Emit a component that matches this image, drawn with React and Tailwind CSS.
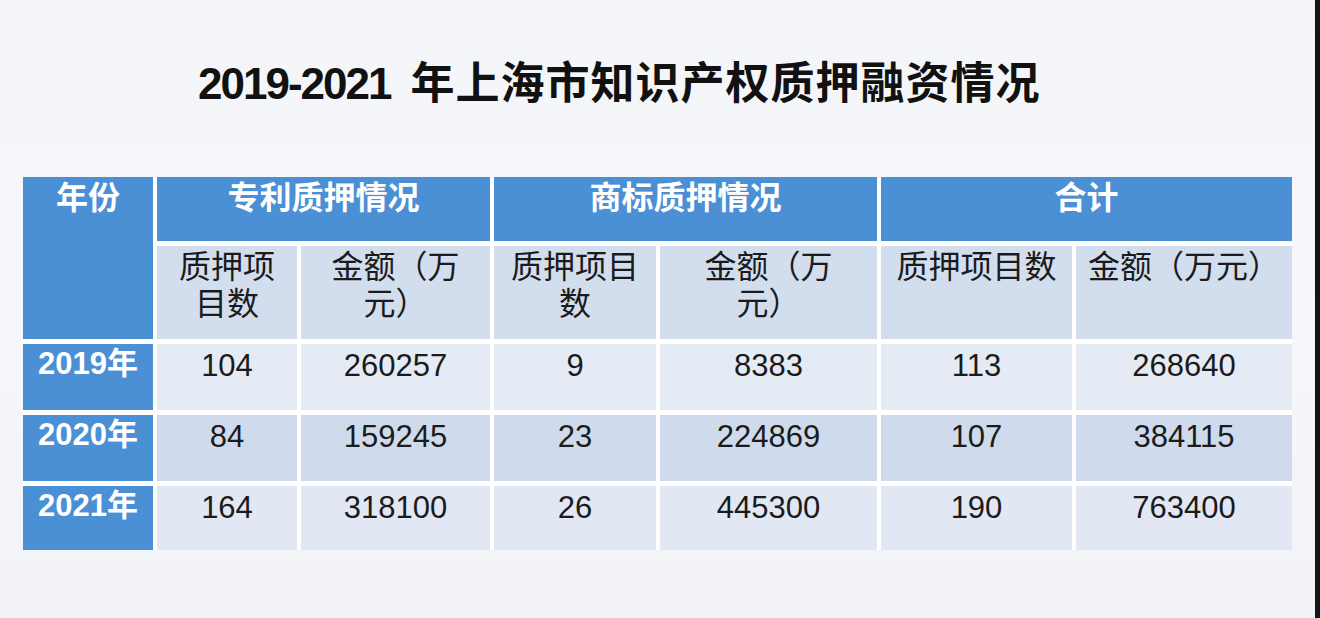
import React from "react";

const cjk = { fontFamily: '"Liberation Sans", "Noto Sans CJK SC", sans-serif' };

const groups = ["专利质押情况", "商标质押情况", "合计"];
const subHeads = [
  ["质押项", "目数"],
  ["金额（万", "元）"],
  ["质押项目", "数"],
  ["金额（万", "元）"],
  ["质押项目数"],
  ["金额（万元）"],
];

const rows = [
  { year: "2019年", values: [104, 260257, 9, 8383, 113, 268640], bg: "bg-[#e5ebf5]" },
  { year: "2020年", values: [84, 159245, 23, 224869, 107, 384115], bg: "bg-[#cfdbec]" },
  { year: "2021年", values: [164, 318100, 26, 445300, 190, 763400], bg: "bg-[#e1e8f4]" },
];

export default function App() {
  return (
    <div className="flex w-[1320px] h-[618px] overflow-hidden" style={cjk}>
      <div className="w-[1315px] h-full bg-gradient-to-b from-[#f3f5f8] via-[#f6f7fa] to-[#f1f3f7]">
        <h1 className="pl-[198px] pt-[56px] h-[177px] flex items-start text-[#111] font-bold whitespace-nowrap">
          <span className="text-[44px] leading-[55px] tracking-[-2px] mr-[20px]">2019-2021</span>
          <span className="text-[44px] leading-[55px] tracking-[1px]">年上海市知识产权质押融资情况</span>
        </h1>

        <div className="ml-[23px] w-fit grid grid-cols-[130px_140px_189px_162px_217px_191px_216px] grid-rows-[64px_93px_66px_66px_64px] gap-x-[4px] gap-y-[5px] bg-white">
          <div className="row-span-2 bg-[#4b8fd5] text-white text-[32px] leading-[40px] font-bold text-center pt-[1px]">
            年份
          </div>
          {groups.map((g) => (
            <div key={g} className="col-span-2 bg-[#4b8fd5] text-white text-[32px] leading-[40px] font-bold text-center pt-[1px]">
              {g}
            </div>
          ))}
          {subHeads.map((lines, i) => (
            <div key={i} className="bg-[#d2deee] text-[#1b1b1b] text-[32px] leading-[37px] text-center pt-[3px] whitespace-nowrap">
              {lines.map((l) => (
                <div key={l}>{l}</div>
              ))}
            </div>
          ))}
          {rows.map((r) => (
            <React.Fragment key={r.year}>
              <div className="bg-[#4b8fd5] text-white text-[31px] leading-[36px] font-bold text-center pt-[2px]">
                {r.year}
              </div>
              {r.values.map((v, i) => (
                <div key={i} className={`${r.bg} text-[#1b1b1b] text-[31px] leading-[36px] text-center pt-[4px]`}>
                  {v}
                </div>
              ))}
            </React.Fragment>
          ))}
        </div>
      </div>
      <div className="flex-1 h-full bg-[#151515]" />
    </div>
  );
}
